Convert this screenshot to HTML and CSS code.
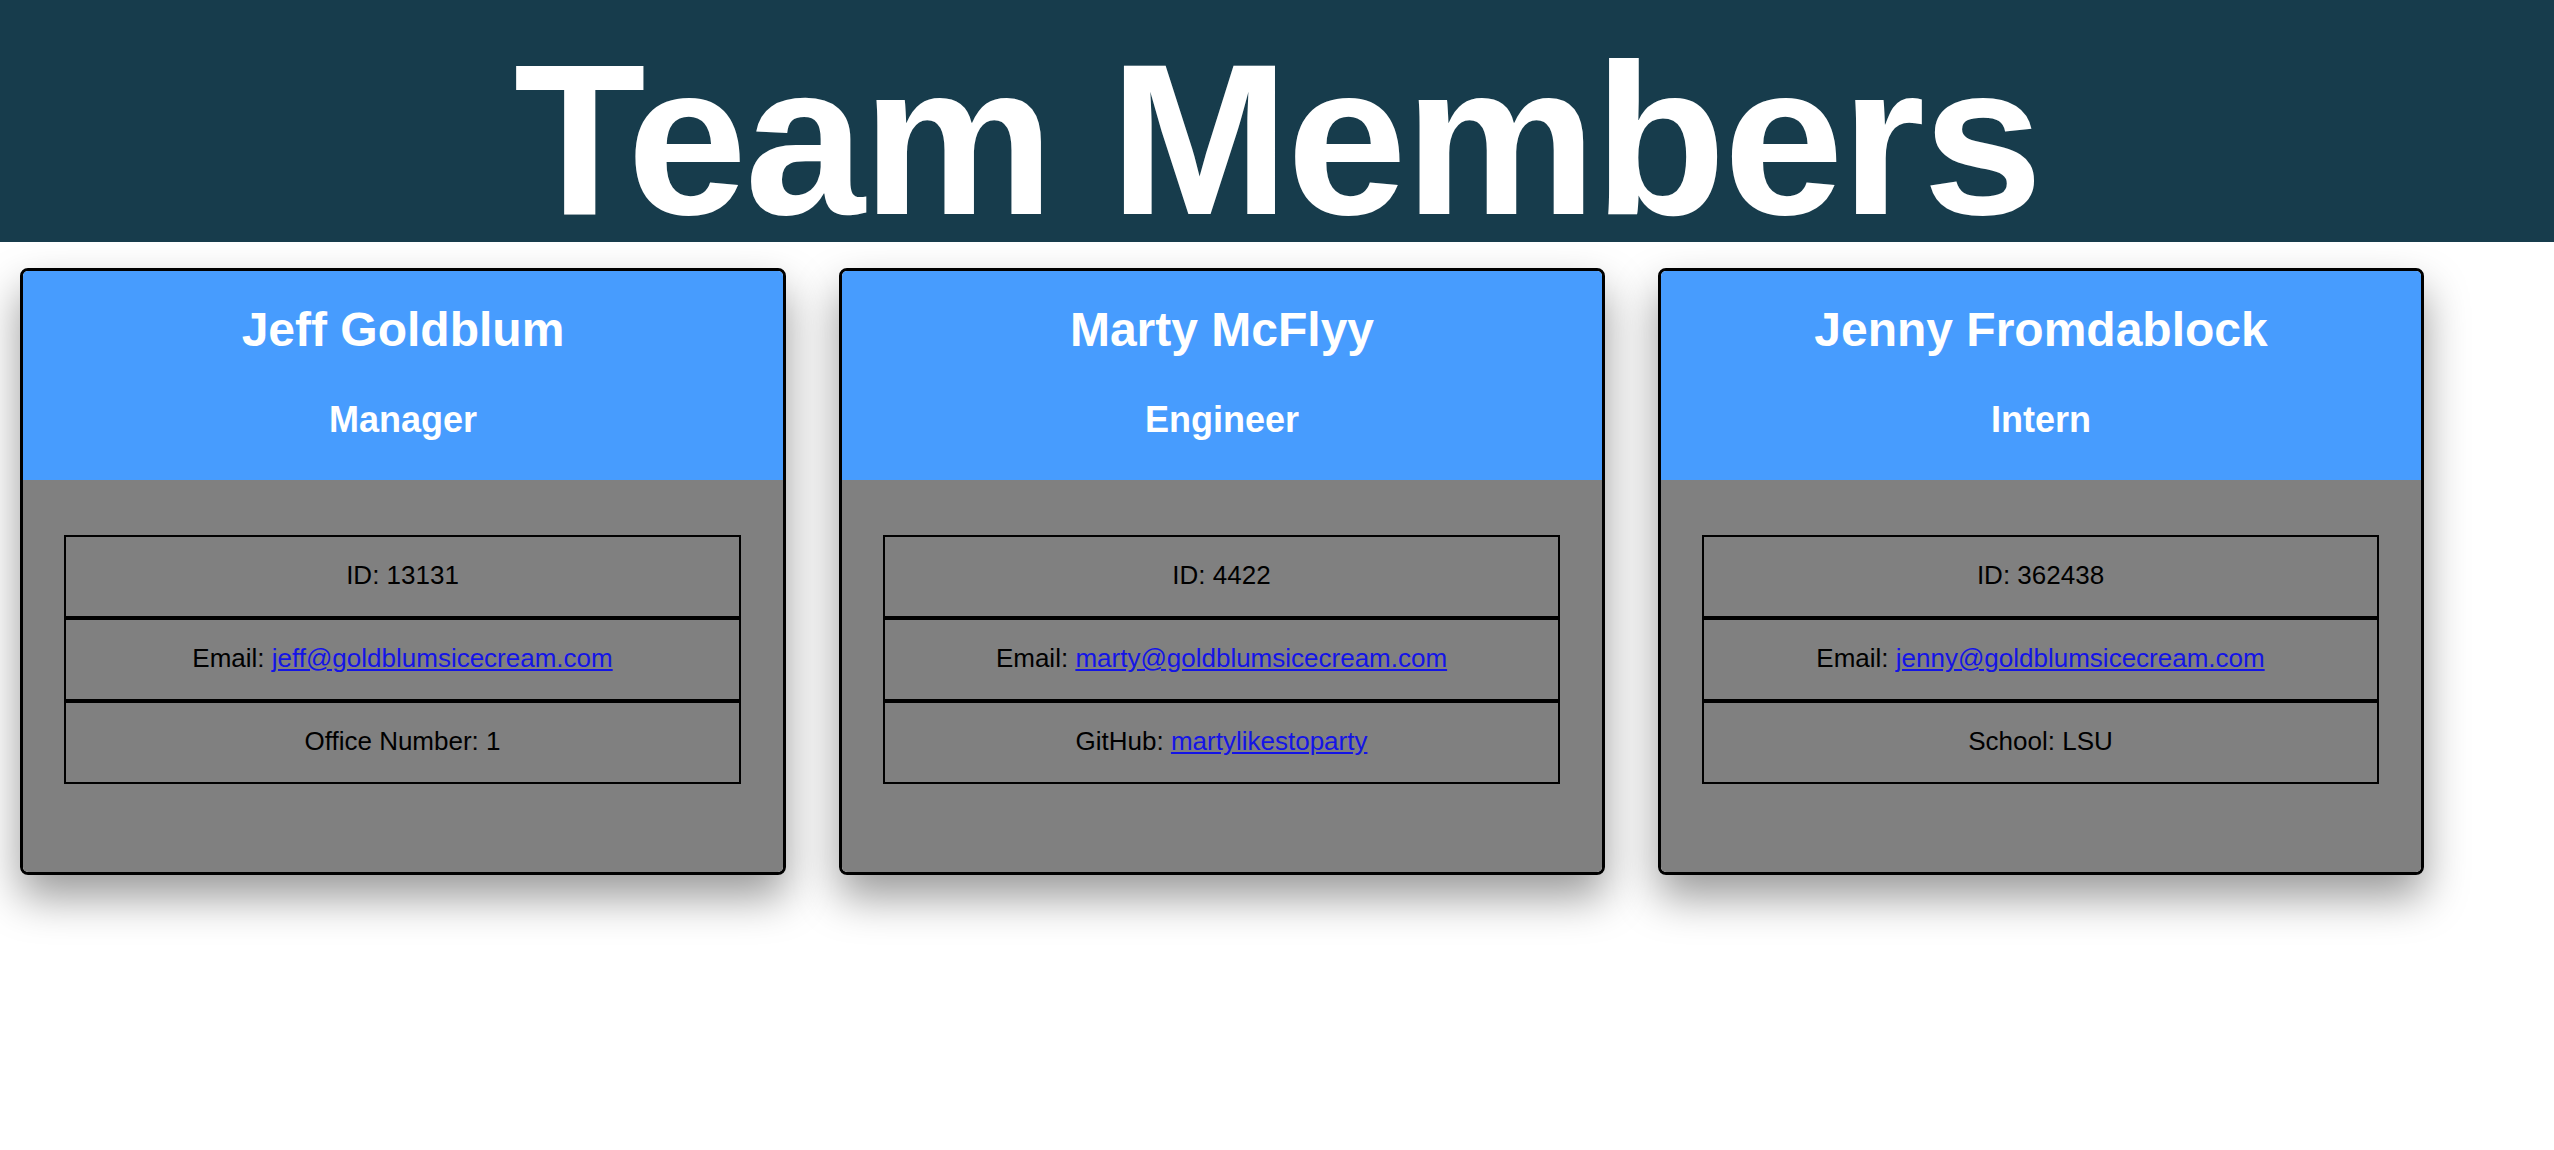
FILE: index.html
```html
<!DOCTYPE html>
<html lang="en">
<head>
<meta charset="utf-8">
<title>Team Members</title>
<link rel="stylesheet" href="styles.css">
</head>
<body>
<header class="banner">
  <h1 class="banner-title">Team Members</h1>
</header>
<main class="team">
  <section class="card">
    <div class="card-head">
      <h2 class="card-name">Jeff Goldblum</h2>
      <h3 class="card-role">Manager</h3>
    </div>
    <div class="card-body">
      <ul class="info">
        <li class="info-row">ID: 13131</li>
        <li class="info-row">Email: <a href="mailto:jeff@goldblumsicecream.com">jeff@goldblumsicecream.com</a></li>
        <li class="info-row">Office Number: 1</li>
      </ul>
    </div>
  </section>
  <section class="card">
    <div class="card-head">
      <h2 class="card-name">Marty McFlyy</h2>
      <h3 class="card-role">Engineer</h3>
    </div>
    <div class="card-body">
      <ul class="info">
        <li class="info-row">ID: 4422</li>
        <li class="info-row">Email: <a href="mailto:marty@goldblumsicecream.com">marty@goldblumsicecream.com</a></li>
        <li class="info-row">GitHub: <a href="#">martylikestoparty</a></li>
      </ul>
    </div>
  </section>
  <section class="card">
    <div class="card-head">
      <h2 class="card-name">Jenny Fromdablock</h2>
      <h3 class="card-role">Intern</h3>
    </div>
    <div class="card-body">
      <ul class="info">
        <li class="info-row">ID: 362438</li>
        <li class="info-row">Email: <a href="mailto:jenny@goldblumsicecream.com">jenny@goldblumsicecream.com</a></li>
        <li class="info-row">School: LSU</li>
      </ul>
    </div>
  </section>
</main>
</body>
</html>
```
FILE: styles.css
```css
html, body {
  margin: 0;
  padding: 0;
  background: #ffffff;
  font-family: "Liberation Sans", Arial, sans-serif;
}

.banner {
  background: #173c4c;
  height: 242px;
}

.banner-title {
  margin: 0;
  padding-top: 31px;
  line-height: 216px;
  font-size: 216px;
  font-weight: bold;
  letter-spacing: -2.5px;
  color: #ffffff;
  text-align: center;
}

.team {
  display: flex;
  align-items: flex-start;
  gap: 53px;
  padding: 26px 0 120px 20px;
}

.card {
  box-sizing: border-box;
  width: 766px;
  border: 3px solid #000000;
  border-radius: 8px;
  overflow: hidden;
  box-shadow: 0 22px 44px rgba(0, 0, 0, 0.4);
}

.card-head {
  background: #479cfe;
  color: #ffffff;
  text-align: center;
  padding: 31px 0 40px;
}

.card-name {
  margin: 0;
  font-size: 48px;
  line-height: 55px;
  font-weight: bold;
}

.card-role {
  margin: 42px 0 0;
  font-size: 36px;
  line-height: 41px;
  font-weight: bold;
}

.card-body {
  background: #808080;
  padding: 55px 42px 88px 41px;
}

.info {
  list-style: none;
  margin: 0;
  padding: 0;
}

.info-row {
  border: 2px solid #000000;
  padding: 23px 0 26px;
  font-size: 26px;
  line-height: 30px;
  text-align: center;
  color: #000000;
}

.info-row a {
  color: #1414e6;
  text-decoration: underline;
}
```
